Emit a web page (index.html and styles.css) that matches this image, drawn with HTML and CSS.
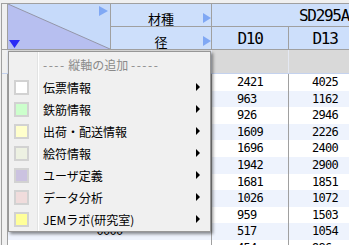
FILE: index.html
```html
<!DOCTYPE html>
<html lang="ja">
<head>
  <meta charset="UTF-8" />
  <title>鉄筋集計表</title>
  <link rel="stylesheet" href="styles.css">
</head>
<body>
  <div class="sheet">
    <div class="head">
      <div class="cell rh"></div>
      <div class="cell corner">
        <svg viewBox="0 0 102 45" width="102" height="45">
          <polygon points="0,0 102,45 0,45" fill="#b7bff0"/>
          <line x1="0" y1="0" x2="102" y2="45" stroke="#9496a8" stroke-width="1"/>
          <polygon points="91,2 100,7 91,12" fill="#80a8f4"/>
          <polygon points="1,36 12,36 6.5,44" fill="#2b2bf5"/>
        </svg>
      </div>
      <div class="cell label">材種<span class="mark"></span></div>
      <div class="cell grade">SD295A</div>
      <div class="cell label">径<span class="mark"></span></div>
      <div class="cell size">D10</div>
      <div class="cell size">D13</div>
      <div class="cell size">D16</div>
    </div>

    <div class="row filter">
      <div class="cell rh"></div>
      <div class="cell key"></div>
      <div class="cell d10"></div>
      <div class="cell d13"></div>
      <div class="cell d16"></div>
    </div>

    <div class="row">
      <div class="cell rh"></div>
      <div class="cell key"><span class="num">0401</span></div>
      <div class="cell d10"><span class="num">2421</span></div>
      <div class="cell d13"><span class="num">4025</span></div>
      <div class="cell d16"><span class="num">3380</span></div>
    </div>
    <div class="row alt">
      <div class="cell rh"></div>
      <div class="cell key"><span class="num">0402</span></div>
      <div class="cell d10"><span class="num">963</span></div>
      <div class="cell d13"><span class="num">1162</span></div>
      <div class="cell d16"><span class="num">1420</span></div>
    </div>
    <div class="row">
      <div class="cell rh"></div>
      <div class="cell key"><span class="num">0403</span></div>
      <div class="cell d10"><span class="num">926</span></div>
      <div class="cell d13"><span class="num">2946</span></div>
      <div class="cell d16"><span class="num">2115</span></div>
    </div>
    <div class="row alt">
      <div class="cell rh"></div>
      <div class="cell key"><span class="num">0404</span></div>
      <div class="cell d10"><span class="num">1609</span></div>
      <div class="cell d13"><span class="num">2226</span></div>
      <div class="cell d16"><span class="num">1987</span></div>
    </div>
    <div class="row">
      <div class="cell rh"></div>
      <div class="cell key"><span class="num">0405</span></div>
      <div class="cell d10"><span class="num">1696</span></div>
      <div class="cell d13"><span class="num">2400</span></div>
      <div class="cell d16"><span class="num">2210</span></div>
    </div>
    <div class="row alt">
      <div class="cell rh"></div>
      <div class="cell key"><span class="num">0406</span></div>
      <div class="cell d10"><span class="num">1942</span></div>
      <div class="cell d13"><span class="num">2900</span></div>
      <div class="cell d16"><span class="num">2604</span></div>
    </div>
    <div class="row">
      <div class="cell rh"></div>
      <div class="cell key"><span class="num">0407</span></div>
      <div class="cell d10"><span class="num">1681</span></div>
      <div class="cell d13"><span class="num">1851</span></div>
      <div class="cell d16"><span class="num">1733</span></div>
    </div>
    <div class="row alt">
      <div class="cell rh"></div>
      <div class="cell key"><span class="num">0408</span></div>
      <div class="cell d10"><span class="num">1026</span></div>
      <div class="cell d13"><span class="num">1072</span></div>
      <div class="cell d16"><span class="num">980</span></div>
    </div>
    <div class="row">
      <div class="cell rh"></div>
      <div class="cell key"><span class="num">0409</span></div>
      <div class="cell d10"><span class="num">959</span></div>
      <div class="cell d13"><span class="num">1503</span></div>
      <div class="cell d16"><span class="num">1290</span></div>
    </div>
    <div class="row alt">
      <div class="cell rh"></div>
      <div class="cell key"><span class="num">0000</span></div>
      <div class="cell d10"><span class="num">517</span></div>
      <div class="cell d13"><span class="num">1054</span></div>
      <div class="cell d16"><span class="num">866</span></div>
    </div>
    <div class="row">
      <div class="cell rh"></div>
      <div class="cell key"></div>
      <div class="cell d10"><span class="num">454</span></div>
      <div class="cell d13"><span class="num">986</span></div>
      <div class="cell d16"><span class="num">702</span></div>
    </div>
  </div>

  <!-- 右クリックメニュー -->
  <div class="menu">
    <div class="menu-title"><span class="dash">----</span> 縦軸の追加 <span class="dash">-----</span></div>
    <div class="item"><span class="swatch sw-slip"></span><span class="text">伝票情報</span><span class="sub"></span></div>
    <div class="item"><span class="swatch sw-rebar"></span><span class="text">鉄筋情報</span><span class="sub"></span></div>
    <div class="item"><span class="swatch sw-ship"></span><span class="text">出荷・配送情報</span><span class="sub"></span></div>
    <div class="item"><span class="swatch sw-mark"></span><span class="text">絵符情報</span><span class="sub"></span></div>
    <div class="item"><span class="swatch sw-user"></span><span class="text">ユーザ定義</span><span class="sub"></span></div>
    <div class="item"><span class="swatch sw-data"></span><span class="text">データ分析</span><span class="sub"></span></div>
    <div class="item"><span class="swatch sw-lab"></span><span class="text">JEMラボ(研究室)</span><span class="sub"></span></div>
  </div>
</body>
</html>
```

FILE: styles.css
```css
* {
  box-sizing: border-box;
}
html, body {
  margin: 0;
  overflow: hidden;
}
body {
  height: 245px;
  background: #f0f0f0;
  font-family: "Noto Sans CJK JP", sans-serif;
  color: #000;
}

/* grid */
.sheet {
  width: 436px;
  margin: 3px 0 0 1px;
  border-top: 1px solid #a0a0a0;
  border-left: 1px solid #a0a0a0;
  background: #fff;
}
.cell {
  border-right: 1px solid #a0a0a0;
}
.head {
  display: grid;
  grid-template-columns: 6px 103px 101px 77px 73px 75px;
  grid-template-rows: 23px 23px;
}
.head .cell {
  border-bottom: 1px solid #a0a0a0;
  background: #cddffb;
  text-align: center;
  line-height: 20px;
}
.head .rh {
  grid-row: 1 / 3;
  background: #f0f0f0;
}
.head .corner {
  grid-row: 1 / 3;
  background: #c6dafa;
}
.corner svg {
  display: block;
}
.label {
  position: relative;
  font-size: 13px;
  padding-top: 5px;
}
.mark {
  position: absolute;
  right: 0;
  top: 9px;
  border-left: 8px solid #80a8f4;
  border-top: 5px solid transparent;
  border-bottom: 5px solid transparent;
}
.grade {
  grid-column: 4 / 7;
}
.grade, .size {
  padding-top: 2px;
  font-family: "DejaVu Sans Mono", monospace;
  font-size: 16px;
  letter-spacing: -1.3px;
}

.row {
  display: flex;
  height: 16.6px;
  font-size: 12px;
  line-height: 16.6px;
}
.row .cell {
  flex: none;
  text-align: center;
}
.row .rh {
  width: 6px;
  background: #f0f0f0;
}
.key {
  width: 204px;
}
.d10 {
  width: 77px;
}
.d13 {
  width: 73px;
}
.d16 {
  width: 75px;
}
.row.alt {
  background: #eef3fd;
}
.row.filter {
  height: 24px;
  background: #d9d9d9;
  border-bottom: 1px solid #c4d2ee;
}
.filter .cell {
  border-right-color: #e4e8f2;
}
.num {
  display: inline-block;
  width: 26px;
  text-align: left;
  vertical-align: top;
  font-family: "DejaVu Sans Mono", monospace;
  font-size: 12px;
  letter-spacing: -0.7px;
  line-height: 16.6px;
}

/* context menu */
.menu {
  position: absolute;
  left: 8px;
  top: 51px;
  width: 203px;
  padding: 2px 0 1px;
  border: 1px solid #979797;
  background: linear-gradient(to right, #f0f0f0 28px, #e2e3e3 28px 29px, #fff 29px 30px, #f0f0f0 30px);
  box-shadow: 2px 2px 3px rgba(0, 0, 0, 0.45);
  font-size: 12px;
}
.menu-title {
  height: 22px;
  line-height: 22px;
  padding-left: 34px;
  color: #8a8a8a;
}
.dash {
  letter-spacing: 1.5px;
}
.item {
  display: flex;
  align-items: center;
  height: 22px;
}
.swatch {
  width: 15px;
  height: 15px;
  margin-left: 5px;
  border: 2px solid #d2d2d2;
}
.text {
  margin-left: 14px;
}
.sub {
  margin-left: auto;
  margin-right: 10px;
  border-left: 4px solid #000;
  border-top: 4px solid transparent;
  border-bottom: 4px solid transparent;
}
.sw-slip { background: #ffffff; }
.sw-rebar { background: #ccffcc; }
.sw-ship { background: #ffffcc; }
.sw-mark { background: #edf1e2; }
.sw-user { background: #cbc2e0; }
.sw-data { background: #f0dcdc; }
.sw-lab { background: #ffff99; }
```
